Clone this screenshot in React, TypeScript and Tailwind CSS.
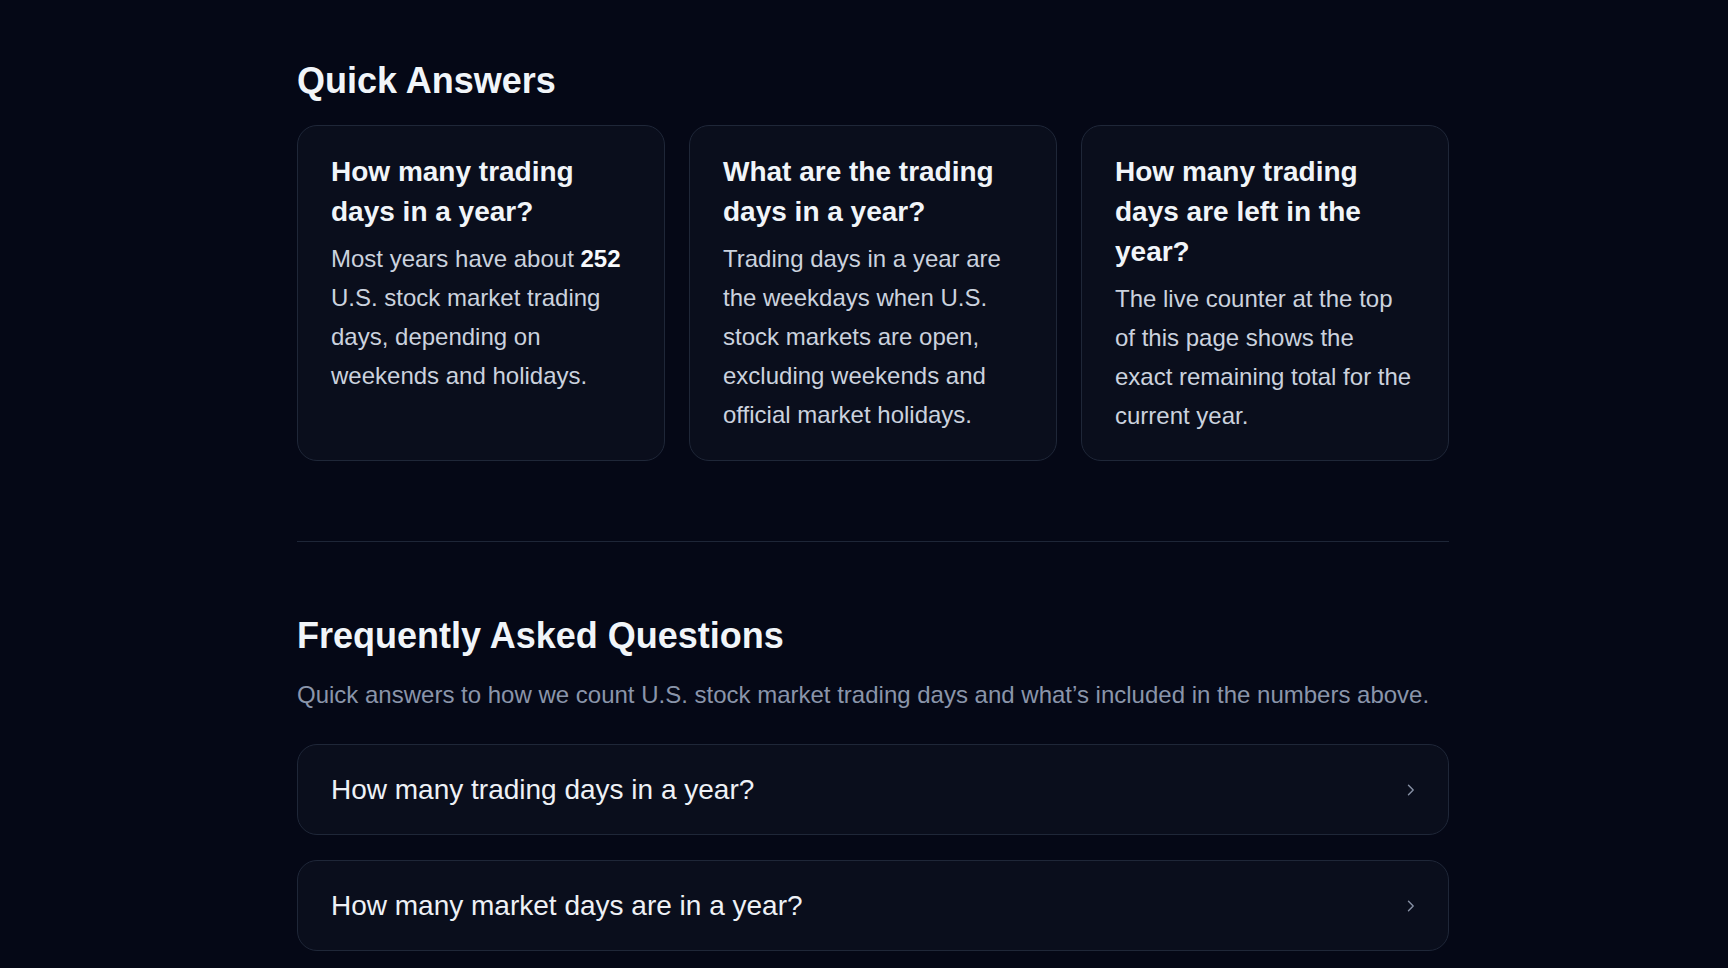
import React from "react";

const cards = [
  {
    title: "How many trading days in a year?",
    body: (
      <>
        Most years have about <strong className="font-bold text-[#f8fafc]">252</strong> U.S. stock market trading days, depending on weekends and holidays.
      </>
    ),
  },
  {
    title: "What are the trading days in a year?",
    body: <>Trading days in a year are the weekdays when U.S. stock markets are open, excluding weekends and official market holidays.</>,
  },
  {
    title: "How many trading days are left in the year?",
    body: <>The live counter at the top of this page shows the exact remaining total for the current year.</>,
  },
];

const faqs = ["How many trading days in a year?", "How many market days are in a year?"];

function Chevron() {
  return (
    <svg width="8" height="12" viewBox="0 0 8 12" fill="none" className="shrink-0">
      <path d="M1.5 1.2 L6.2 6 L1.5 10.8" stroke="#8790a4" strokeWidth="1.4" strokeLinecap="round" strokeLinejoin="round" />
    </svg>
  );
}

export default function App() {
  return (
    <div className="min-h-screen bg-[#050816] font-['Liberation_Sans',Arial,sans-serif]">
      <div className="mx-auto w-[1170px] pl-[18px] pt-[61px] pb-[40px]">
        <h2 className="text-[36px] leading-[40px] font-bold text-[#f1f5f9]">Quick Answers</h2>
        <div className="mt-[24px] grid grid-cols-3 gap-6">
          {cards.map((c, i) => (
            <div key={i} className="rounded-[20px] border border-[#1f2738] bg-[#0a0e1c] px-[33px] pt-[26px] pb-[25px]">
              <h3 className="text-[28px] leading-[40px] font-bold text-[#f1f5f9]">{c.title}</h3>
              <p className="mt-[7px] text-[24px] leading-[39px] text-[#cbd2de]">{c.body}</p>
            </div>
          ))}
        </div>

        <div className="mt-[80px] h-px bg-[#1e2637]" />

        <h2 className="mt-[74px] text-[36px] leading-[40px] font-bold text-[#f1f5f9]">Frequently Asked Questions</h2>
        <p className="mt-[19px] text-[24px] leading-[39px] text-[#8a95aa]">
          Quick answers to how we count U.S. stock market trading days and what’s included in the numbers above.
        </p>

        <div className="mt-[30px] flex flex-col gap-[25px]">
          {faqs.map((q, i) => (
            <div
              key={i}
              className="flex h-[91px] items-center justify-between rounded-[20px] border border-[#1f2738] bg-[#0a0e1c] pl-[33px] pr-[33px]"
            >
              <span className="text-[28px] leading-[36px] text-[#eef1f6]">{q}</span>
              <Chevron />
            </div>
          ))}
        </div>
      </div>
    </div>
  );
}
